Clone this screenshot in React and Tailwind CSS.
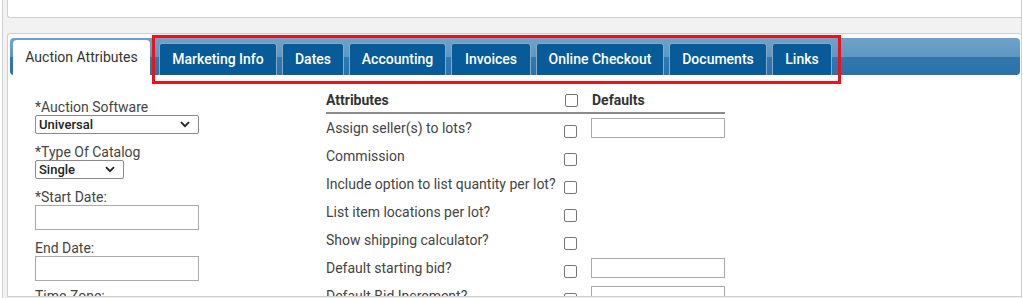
import React from "react";

function Chevron() {
  return (
    <svg width="10" height="7" viewBox="0 0 10 7" className="shrink-0">
      <path d="M1 1.2 L5 5.2 L9 1.2" fill="none" stroke="#222" strokeWidth="1.8" />
    </svg>
  );
}

function Select({ value, w }) {
  return (
    <div className={`${w} h-[19px] border border-[#8a8a8a] rounded-[2px] bg-white flex items-center justify-between pl-[3px] pr-[8px]`}>
      <span className="text-[13px] font-medium text-[#222] leading-none">{value}</span>
      <Chevron />
    </div>
  );
}

function Box() {
  return <span className="block w-[13px] h-[13px] border border-[#767676] rounded-[2px] bg-white" />;
}

const tabs = [
  ["Marketing Info", "w-[118px]"],
  ["Dates", "w-[62px]"],
  ["Accounting", "w-[97px]"],
  ["Invoices", "w-[80px]"],
  ["Online Checkout", "w-[128px]"],
  ["Documents", "w-[98px]"],
  ["Links", "w-[60px]"],
];

const rows = [
  ["Assign seller(s) to lots?", true],
  ["Commission", false],
  ["Include option to list quantity per lot?", false],
  ["List item locations per lot?", false],
  ["Show shipping calculator?", false],
  ["Default starting bid?", true],
  ["Default Bid Increment?", true],
];

export default function App() {
  return (
    <div className="w-[1023px] h-[298px] overflow-hidden bg-white relative font-['Roboto',sans-serif]">
      <div className="ml-[2px] w-[1020px] h-[298px] border-l border-r border-[#cfcfcf] bg-[#f2f2f2] flex flex-col">
        <div className="shrink-0 ml-[4px] h-[18px] bg-white border-l border-b border-[#cfcfcf] rounded-bl-[3px]" />
        <div className="shrink-0 mt-[15px] ml-[4px] h-[264px] overflow-hidden bg-white border border-r-0 border-[#cfcfcf] rounded-t-[3px] pt-[4px] pl-[2px] pr-[1px] flex flex-col">
          <div className="shrink-0 h-[37px] rounded-[4px] bg-[linear-gradient(to_bottom,#6ea2ca_0%,#5f97c2_50%,#3079af_51%,#2a72a9_100%)] flex items-end pl-[3px]">
            <div className="w-[137px] h-[35px] bg-white rounded-t-[4px] flex items-center justify-center text-[14px] text-[#333] pb-[1px]">
              Auction Attributes
            </div>
            <div className="flex items-end gap-[5px] ml-[9px]">
              {tabs.map(([t, w]) => (
                <div
                  key={t}
                  className={`${w} h-[32px] bg-[#075b98] border border-b-0 border-[#86a9c8] rounded-t-[3px] flex items-center justify-center text-white text-[14px] font-medium`}
                >
                  {t}
                </div>
              ))}
            </div>
          </div>
          <div className="flex pl-[25px]">
            <div className="w-[291px] pt-[24px] text-[14px] text-[#444]">
              <div className="leading-[16px]">*Auction Software</div>
              <Select value="Universal" w="w-[164px]" />
              <div className="leading-[16px] mt-[10px]">*Type Of Catalog</div>
              <Select value="Single" w="w-[89px]" />
              <div className="leading-[16px] mt-[10px]">*Start Date:</div>
              <div className="w-[164px] h-[25px] border border-[#aaa] bg-white" />
              <div className="leading-[16px] mt-[10px]">End Date:</div>
              <div className="w-[164px] h-[25px] border border-[#aaa] bg-white" />
              <div className="leading-[16px] mt-[7px]">Time Zone:</div>
            </div>
            <div className="w-[399px] pt-[17px] text-[14px] text-[#444]">
              <div className="flex items-center h-[16px] font-bold text-[#333]">
                <span className="w-[239px]">Attributes</span>
                <span className="w-[27px]"><Box /></span>
                <span>Defaults</span>
              </div>
              <div className="h-[2px] bg-[#8c8c8c] mt-[4px]" />
              {rows.map(([t, inp]) => (
                <div key={t} className="flex h-[28px]">
                  <span className="w-[238px] leading-[16px] pt-[6px] whitespace-nowrap">{t}</span>
                  <span className="w-[27px] pt-[11px]"><Box /></span>
                  {inp && <span className="w-[134px] h-[20px] mt-[4px] border border-[#aaa] bg-white" />}
                </div>
              ))}
            </div>
          </div>
        </div>
      </div>
      <div className="absolute left-[152px] top-[35px] w-[689px] h-[49px] border-[3px] border-[#e8141b]" />
    </div>
  );
}
